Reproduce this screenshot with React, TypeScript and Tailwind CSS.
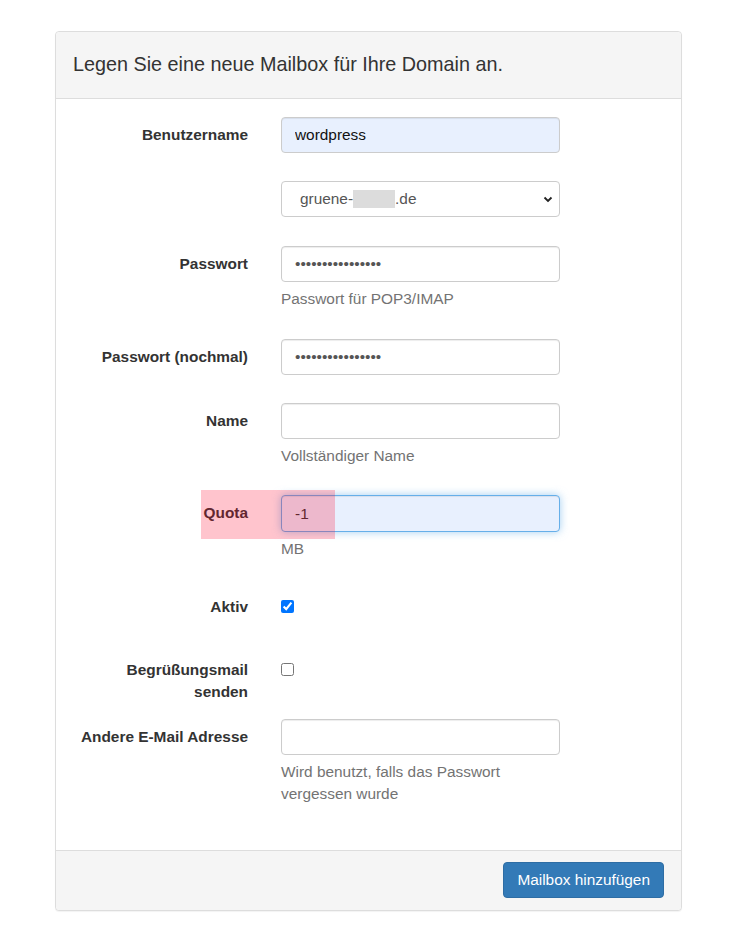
import React, { useState } from "react";

const labelCls =
  "w-[176px] shrink-0 pt-[7px] text-right font-bold text-[15.4px] leading-[22px] text-[#333]";
const baseInput =
  "block w-[279px] rounded-[4px] border px-[13px] text-[15.4px] outline-none";
const inputCls =
  baseInput + " h-[36px] border-[#ccc] bg-white text-[#555] shadow-[inset_0_1px_1px_rgba(0,0,0,0.075)]";
const autofillCls =
  baseInput + " h-[36px] border-[#ccc] bg-[#e8f0fe] text-[#111] shadow-[inset_0_1px_1px_rgba(0,0,0,0.075)]";
const focusCls =
  baseInput +
  " h-[37px] border-[#66afe9] bg-[#e8f0fe] text-[#333] shadow-[inset_0_1px_1px_rgba(0,0,0,0.075),0_0_8px_rgba(102,175,233,0.6)]";
const helpCls = "mt-[6px] w-[279px] text-[15.4px] leading-[22.5px] text-[#737373]";

function Row({
  label,
  children,
  className = "",
}: {
  label?: React.ReactNode;
  children: React.ReactNode;
  className?: string;
}) {
  return (
    <div className={"flex gap-[33px] " + className}>
      <label className={labelCls}>{label}</label>
      <div>{children}</div>
    </div>
  );
}

export default function App() {
  const [form, setForm] = useState({
    username: "wordpress",
    password: "abcdefghijklmnop",
    password2: "abcdefghijklmnop",
    name: "",
    quota: "-1",
    active: true,
    welcome: false,
    altEmail: "",
  });

  const handleChange = (e: React.ChangeEvent<HTMLInputElement>) => {
    const { name, value, type, checked } = e.target;
    setForm((prev) => ({ ...prev, [name]: type === "checkbox" ? checked : value }));
  };

  return (
    <div className="min-h-[927px] bg-white pt-[31px] font-['Liberation_Sans',Arial,sans-serif]">
      <div className="ml-[55px] w-[627px] rounded-[4px] border border-[#ddd] bg-white shadow-[0_1px_1px_rgba(0,0,0,0.05)]">
        <div className="rounded-t-[4px] border-b border-[#ddd] bg-[#f5f5f5] px-[17px] pt-[20px] pb-[22px]">
          <h3 className="text-[19.8px] leading-[24px] text-[#333]">
            Legen Sie eine neue Mailbox für Ihre Domain an.
          </h3>
        </div>

        <form className="px-[16px] pt-[18px] pb-[44px]" onSubmit={(e) => e.preventDefault()}>
          <Row label="Benutzername" className="mb-[28px]">
            <input
              type="text"
              name="username"
              value={form.username}
              onChange={handleChange}
              className={autofillCls}
            />
          </Row>

          <Row className="mb-[29px]">
            <div className="relative flex h-[36px] w-[279px] items-center rounded-[4px] border border-[#ccc] bg-white pl-[18px] text-[15.4px] text-[#555]">
              <span>gruene-</span>
              <span className="inline-block h-[18px] w-[42px] bg-[#dcdcdc]" />
              <span>.de</span>
              <svg
                className="absolute right-[6px] top-[14px]"
                width="10"
                height="7"
                viewBox="0 0 10 7"
              >
                <polyline points="1.5,1.5 5,5 8.5,1.5" fill="none" stroke="#222" strokeWidth="1.8" />
              </svg>
            </div>
          </Row>

          <Row label="Passwort" className="mb-[28px]">
            <input
              type="password"
              name="password"
              value={form.password}
              onChange={handleChange}
              className={inputCls}
            />
            <p className={helpCls}>Passwort für POP3/IMAP</p>
          </Row>

          <Row label="Passwort (nochmal)" className="mb-[28px]">
            <input
              type="password"
              name="password2"
              value={form.password2}
              onChange={handleChange}
              className={inputCls}
            />
          </Row>

          <Row label="Name" className="mb-[28px]">
            <input type="text" name="name" value={form.name} onChange={handleChange} className={inputCls} />
            <p className={helpCls}>Vollständiger Name</p>
          </Row>

          <div className="relative">
            <Row label="Quota" className="mb-[28px]">
              <input
                type="text"
                name="quota"
                value={form.quota}
                onChange={handleChange}
                className={focusCls}
              />
              <p className={helpCls}>MB</p>
            </Row>
            <div className="pointer-events-none absolute left-[129px] top-[-5px] h-[49px] w-[134px] bg-[rgba(255,0,40,0.23)]" />
          </div>

          <Row label="Aktiv" className="mb-[28px] min-h-[35px]">
            <input
              type="checkbox"
              name="active"
              checked={form.active}
              onChange={handleChange}
              className="mt-[11.5px] ml-0 block h-[13px] w-[13px]"
            />
          </Row>

          <Row
            label={
              <>
                Begrüßungsmail
                <br />
                senden
              </>
            }
            className="mb-[16px]"
          >
            <input
              type="checkbox"
              name="welcome"
              checked={form.welcome}
              onChange={handleChange}
              className="mt-[11.5px] ml-0 block h-[13px] w-[13px]"
            />
          </Row>

          <Row label="Andere E-Mail Adresse">
            <input
              type="text"
              name="altEmail"
              value={form.altEmail}
              onChange={handleChange}
              className={inputCls}
            />
            <p className={helpCls}>Wird benutzt, falls das Passwort vergessen wurde</p>
          </Row>
        </form>

        <div className="flex justify-end rounded-b-[4px] border-t border-[#ddd] bg-[#f5f5f5] pt-[11px] pr-[17px] pb-[12px]">
          <button
            type="submit"
            className="h-[36px] rounded-[4px] border border-[#2e6da4] bg-[#337ab7] px-[13px] text-[15.4px] text-white"
          >
            Mailbox hinzufügen
          </button>
        </div>
      </div>
    </div>
  );
}
